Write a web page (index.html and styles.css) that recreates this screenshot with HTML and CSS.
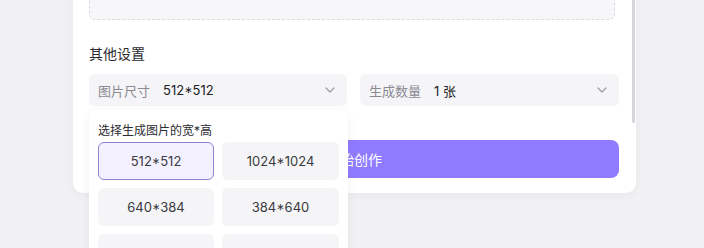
FILE: index.html
```html
<!DOCTYPE html>
<html lang="zh">
<head>
<meta charset="utf-8">
<link rel="stylesheet" href="styles.css">
</head>
<body>
<div class="card">
  <div class="scroll">
    <div class="prompt-box"></div>
    <div class="section-title">其他设置</div>
    <div class="selects">
      <div class="select-wrap">
        <div class="select">
          <span class="label">图片尺寸</span>
          <span class="value">512*512</span>
          <svg class="chev" width="10" height="6" viewBox="0 0 10 6"><polyline points="1,1 5,5 9,1" fill="none" stroke="#9a9aa2" stroke-width="1.2" stroke-linecap="round" stroke-linejoin="round"/></svg>
        </div>
        <div class="popup">
          <div class="popup-title">选择生成图片的宽*高</div>
          <div class="options">
            <div class="opt selected">512*512</div>
            <div class="opt">1024*1024</div>
            <div class="opt">640*384</div>
            <div class="opt">384*640</div>
            <div class="opt">768*512</div>
            <div class="opt">512*768</div>
          </div>
        </div>
      </div>
      <div class="select-wrap">
        <div class="select">
          <span class="label">生成数量</span>
          <span class="value">1 张</span>
          <svg class="chev" width="10" height="6" viewBox="0 0 10 6"><polyline points="1,1 5,5 9,1" fill="none" stroke="#9a9aa2" stroke-width="1.2" stroke-linecap="round" stroke-linejoin="round"/></svg>
        </div>
      </div>
    </div>
    <div class="scrollbar"></div>
  </div>
  <button class="create">开始创作</button>
</div>
</body>
</html>
```

FILE: styles.css
```css
html, body {
  margin: 0;
  padding: 0;
}
body {
  background: #f1f1f4;
  font-family: "Inter", "Noto Sans CJK SC", sans-serif;
  color: #2b2b30;
  width: 704px;
  height: 248px;
  overflow: hidden;
}
.card {
  position: relative;
  margin: -40px 0 0 73px;
  width: 563px;
  box-sizing: border-box;
  padding: 16px 17px 15px 16px;
  background: #fff;
  border-radius: 10px;
  box-shadow: 0 2px 10px rgba(0, 0, 0, 0.04);
}
.scroll {
  position: static;
}
.scrollbar {
  position: absolute;
  right: 1px;
  top: 0;
  width: 3px;
  height: 163px;
  background: #d6d6da;
  border-radius: 2px;
}
.prompt-box {
  height: 44px;
  margin-right: 4px;
  box-sizing: border-box;
  border: 1px dashed #dcdce0;
  border-radius: 6px;
  background: #f7f7f9;
}
.section-title {
  margin-top: 24px;
  font-size: 14px;
  line-height: 20px;
  color: #2b2b30;
}
.selects {
  display: grid;
  grid-template-columns: 258px 259px;
  column-gap: 13px;
  margin-top: 10px;
}
.select-wrap {
  position: relative;
}
.select {
  height: 32px;
  display: flex;
  align-items: center;
  padding: 0 12px 0 9px;
  background: #f5f5f7;
  border-radius: 6px;
  font-size: 13px;
}
.label {
  color: #8a8a92;
}
.value {
  margin-left: 13px;
  color: #222226;
  flex: 1;
}
.chev {
  flex: none;
}
.popup {
  position: absolute;
  z-index: 5;
  left: 0;
  top: 36px;
  width: 259px;
  box-sizing: border-box;
  padding: 12px 9px 10px 9px;
  background: #fff;
  border-radius: 8px;
  box-shadow: 0 2px 10px rgba(0, 0, 0, 0.06);
}
.popup-title {
  font-size: 12px;
  line-height: 18px;
  color: #2b2b30;
}
.options {
  margin-top: 2px;
  display: grid;
  grid-template-columns: 116px 117px;
  column-gap: 8px;
  row-gap: 8px;
}
.opt {
  height: 38px;
  box-sizing: border-box;
  display: flex;
  align-items: center;
  justify-content: center;
  background: #f5f5f7;
  border-radius: 6px;
  font-size: 13px;
  color: #3a3a40;
}
.opt.selected {
  background: #f3f0ff;
  border: 1px solid #8d84d4;
}
.create {
  display: block;
  width: 530px;
  height: 38px;
  margin-top: 34px;
  border: none;
  border-radius: 8px;
  background: #8f7bff;
  color: #fff;
  font-family: "Inter", "Noto Sans CJK SC", sans-serif;
  font-size: 14px;
}
```
